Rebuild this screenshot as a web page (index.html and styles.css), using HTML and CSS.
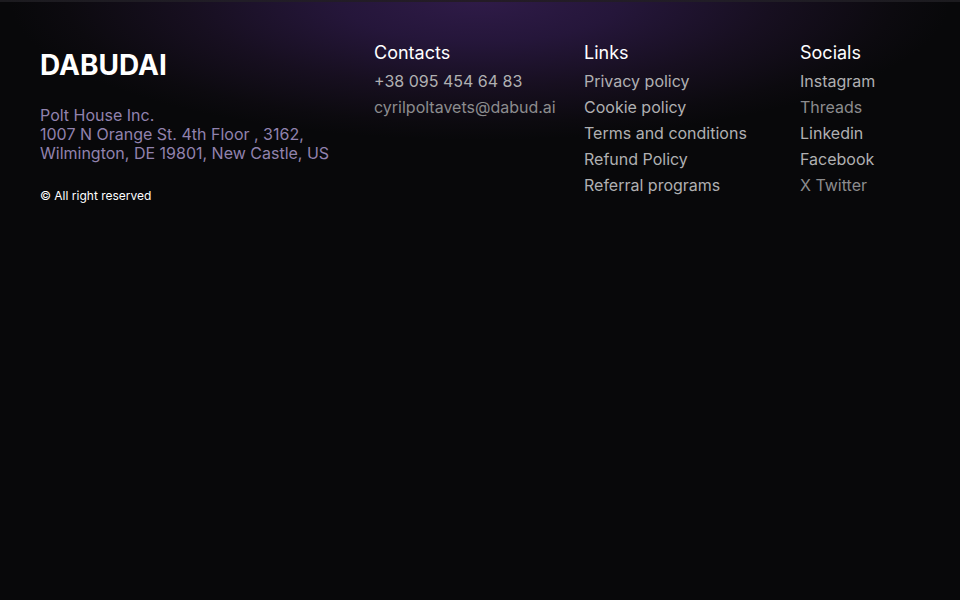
FILE: index.html
```html
<!DOCTYPE html>
<html lang="en">
<head>
<meta charset="utf-8">
<meta name="viewport" content="width=device-width, initial-scale=1">
<title>Dabudai</title>
<link rel="stylesheet" href="styles.css">
</head>
<body>
<footer class="footer">
  <div class="brand">
    <a class="logo" href="#">DABUDAI</a>
    <address class="address">Polt House Inc.<br>1007 N Orange St. 4th Floor , 3162,<br>Wilmington, DE 19801, New Castle, US</address>
    <p class="copyright">© All right reserved</p>
  </div>
  <section class="column">
    <h2 class="title">Contacts</h2>
    <a class="link" href="#">+38 095 454 64 83</a>
    <a class="link dim" href="#">cyrilpoltavets@dabud.ai</a>
  </section>
  <nav class="column">
    <h2 class="title">Links</h2>
    <a class="link" href="#">Privacy policy</a>
    <a class="link" href="#">Cookie policy</a>
    <a class="link" href="#">Terms and conditions</a>
    <a class="link" href="#">Refund Policy</a>
    <a class="link" href="#">Referral programs</a>
  </nav>
  <nav class="column">
    <h2 class="title">Socials</h2>
    <a class="link" href="#">Instagram</a>
    <a class="link dim" href="#">Threads</a>
    <a class="link" href="#">Linkedin</a>
    <a class="link" href="#">Facebook</a>
    <a class="link dim" href="#">X Twitter</a>
  </nav>
</footer>
</body>
</html>
```
FILE: styles.css
```css
* { box-sizing: border-box; }

body {
  margin: 0;
  min-height: 100vh;
  background: #08080a;
  color: #fff;
  font-family: Inter, "Liberation Sans", sans-serif;
}

.footer {
  display: grid;
  grid-template-columns: 334fr 210fr 216fr 120fr;
  padding: 43px 40px;
  background:
    linear-gradient(90deg, #1c1b1f, #211d27 25%, #241b26 50%, #211d27 75%, #1c1b1f) top / 100% 2px no-repeat,
    radial-gradient(ellipse 49% 140px at 50% 0, #2f1b48 0%, #25163a 30%, #170f20 62%, #0c0a0f 88%, #08080a 100%);
}

.logo {
  display: block;
  color: #fff;
  font-size: 28px;
  font-weight: 700;
  line-height: 44px;
  text-decoration: none;
}

.address {
  margin-top: 19px;
  color: #9182ae;
  font-size: 16px;
  font-style: normal;
  line-height: 19px;
}

.copyright {
  margin: 24px 0 0;
  font-size: 12px;
  line-height: 18px;
}

.column {
  display: flex;
  flex-direction: column;
  align-items: flex-start;
}

.title {
  margin: 0 0 8px;
  font-size: 18px;
  font-weight: 400;
  line-height: 20px;
}

.link {
  margin-bottom: 6px;
  color: #b0b0b2;
  font-size: 16px;
  line-height: 20px;
  text-decoration: none;
  white-space: nowrap;
}

.dim { color: #8c8c8e; }
```
